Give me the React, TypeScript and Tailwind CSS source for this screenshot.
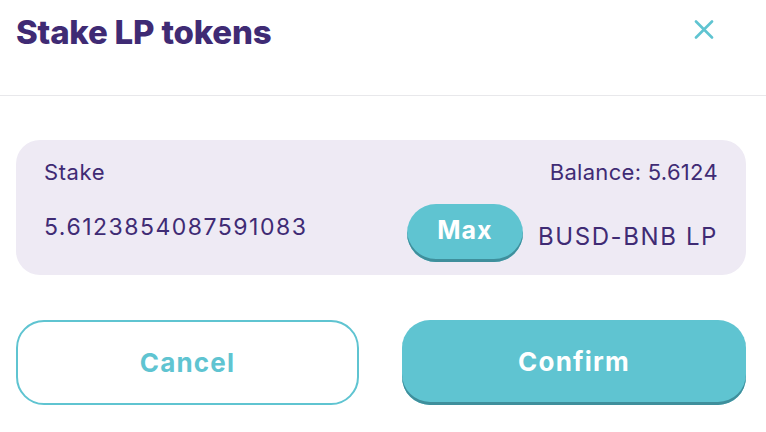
import React from "react";

export default function App() {
  const font = { fontFamily: 'Inter, "Open Sans", sans-serif' };
  return (
    <div className="w-[766px] h-[432px] bg-white overflow-hidden" style={font}>
      <div className="h-[96px] border-b border-[#e8e8eb] flex items-start justify-between pl-4 pr-[52px]">
        <h1 className="mt-[10px] text-[33px] leading-[44px] font-extrabold tracking-[-0.2px] text-[#3f2b74]">Stake LP tokens</h1>
        <svg className="mt-[20px]" width="20" height="19" viewBox="0 0 20 19" fill="none">
          <path d="M2 1.5 L18 17.5 M18 1.5 L2 17.5" stroke="#5fc4d1" strokeWidth="2.6" strokeLinecap="round" />
        </svg>
      </div>
      <div className="pl-4 pt-[44px]">
        <div className="w-[730px] h-[135px] rounded-[24px] bg-[#eeeaf4] px-[28px] pt-[18px] text-[#3f2b74]">
          <div className="flex justify-between items-center h-[28px] text-[22px]">
            <span className="tracking-[0.6px]">Stake</span>
            <span className="tracking-[0.3px]">Balance: 5.6124</span>
          </div>
          <div className="flex items-start mt-[18px]">
            <span className="flex-1 text-[23px] leading-[32px] mt-[7px] tracking-[1.5px]">5.6123854087591083</span>
            <button className="w-[116px] h-[58px] rounded-full bg-[#5fc4d1] shadow-[inset_0_-3px_0_#3f8f9c] text-white font-bold text-[25px] tracking-[1px] pb-[4px]">Max</button>
            <span className="ml-[15px] mt-[17px] text-[24px] leading-[32px] tracking-[1.6px]">BUSD-BNB LP</span>
          </div>
        </div>
        <div className="flex gap-[43px] mt-[45px]">
          <button className="w-[343px] h-[85px] rounded-[28px] border-2 border-[#5fc4d1] bg-white text-[#5fc4d1] font-bold text-[26px] tracking-[1.2px]">Cancel</button>
          <button className="w-[344px] h-[85px] rounded-[28px] bg-[#5fc4d1] shadow-[inset_0_-3px_0_#3f8f9c] text-white font-bold text-[26px] tracking-[1.2px] pb-[2px]">Confirm</button>
        </div>
      </div>
    </div>
  );
}
